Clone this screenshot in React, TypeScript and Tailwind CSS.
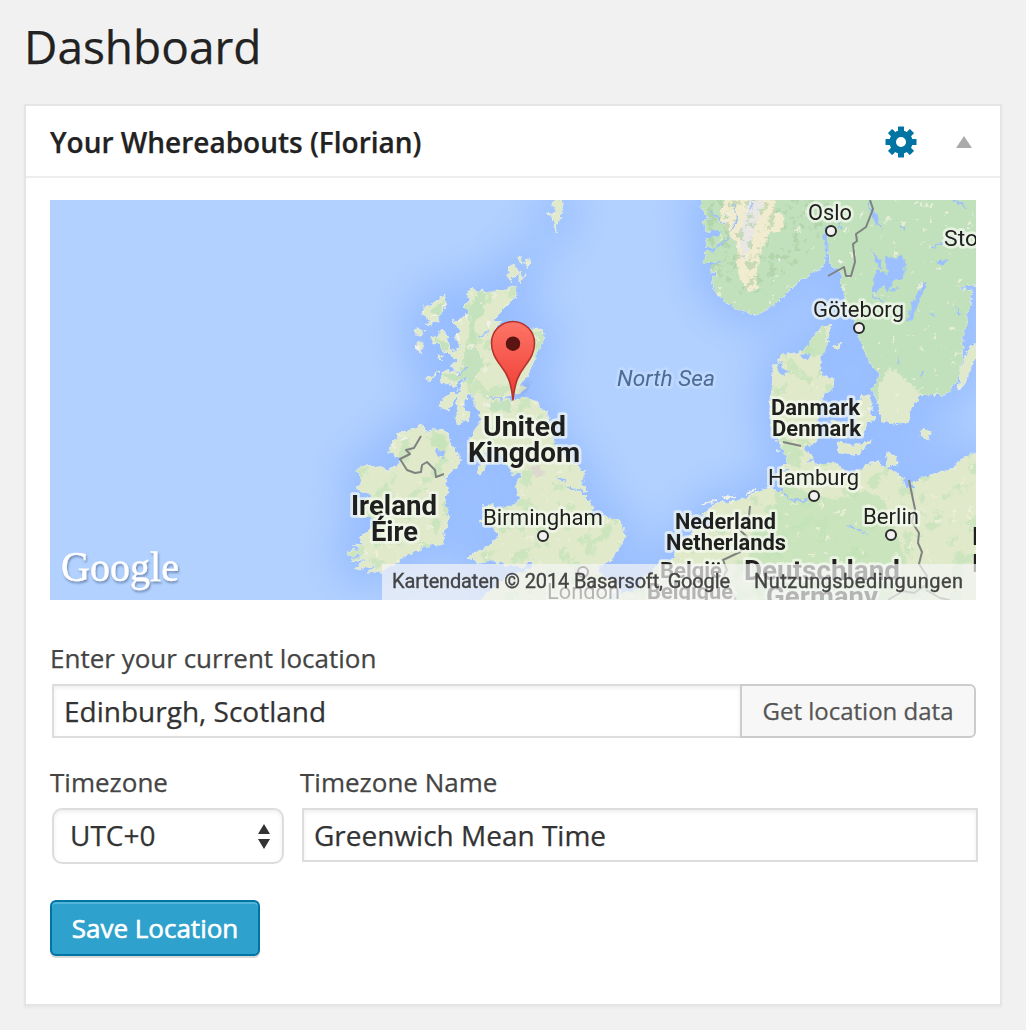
import React from "react";

const BRITAIN =
  "M472 288 L478 292 L485 291 L498 291 L506 290 L512 287 L517 288 L515 298 L506 307 L497 316 L492 321 L501 322 L494 331 L506 330 L520 329 L533 329 L541 329 L545 337 L540 347 L535 360 L530 372 L524 380 L520 386 L526 388 L522 391 L512 395 L502 398 L513 400 L527 397 L537 402 L542 409 L547 413 L552 433 L555 447 L570 460 L577 466 L585 473 L582 484 L588 492 L578 489 L587 498 L593 506 L592 515 L607 517 L620 521 L625 531 L623 543 L615 553 L612 560 L600 565 L598 572 L606 577 L616 582 L614 592 L600 602 L480 602 L487 593 L497 585 L507 577 L522 573 L531 567 L535 557 L525 567 L503 565 L493 560 L480 562 L467 558 L473 553 L485 549 L493 543 L498 536 L493 527 L490 523 L478 523 L485 517 L482 506 L490 505 L497 508 L513 505 L520 503 L517 489 L517 480 L522 472 L513 476 L511 469 L507 464 L497 447 L488 447 L480 462 L474 450 L468 453 L470 438 L475 430 L482 420 L477 410 L473 401 L474 392 L466 396 L464 402 L465 412 L462 424 L457 425 L456 418 L458 405 L457 394 L463 384 L467 376 L457 380 L453 376 L461 372 L451 368 L457 361 L449 353 L461 347 L454 337 L460 331 L453 322 L463 318 L468 313 L464 305 L470 299 L468 292 Z";
const IRELAND =
  "M420 424 L427 432 L437 429 L448 432 L450 445 L458 452 L461 462 L453 470 L445 478 L448 493 L445 502 L449 517 L445 530 L442 545 L430 545 L420 550 L407 555 L397 563 L383 570 L373 573 L367 572 L378 563 L360 570 L354 568 L370 558 L355 563 L352 560 L366 553 L348 557 L347 552 L362 548 L353 546 L363 543 L360 538 L368 530 L377 522 L372 518 L358 516 L363 503 L372 495 L358 490 L362 480 L357 470 L360 466 L380 467 L386 470 L395 468 L401 458 L388 452 L393 443 L398 433 L413 430 Z";
const SCANDINAVIA =
  "M700 198 L704 215 L711 217 L703 221 L706 232 L716 233 L706 238 L708 248 L719 246 L706 252 L703 263 L714 262 L710 274 L716 273 L712 287 L723 300 L740 311 L757 315 L770 308 L787 293 L803 277 L822 268 L825 257 L825 243 L827 240 L828 255 L832 267 L841 271 L842 287 L845 303 L853 317 L857 333 L862 347 L870 363 L880 375 L872 390 L877 400 L881 420 L893 424 L909 422 L911 407 L922 395 L948 394 L957 380 L962 360 L963 340 L968 313 L973 291 L956 288 L976 284 L980 284 L980 198 Z";
const CONTINENT =
  "M832 323 L817 331 L807 347 L800 352 L782 355 L773 367 L772 387 L770 407 L772 433 L780 443 L784 453 L788 461 L782 467 L777 474 L779 486 L784 492 L772 489 L767 488 L755 493 L747 498 L740 500 L717 503 L703 513 L698 525 L690 535 L680 543 L675 552 L672 560 L660 563 L650 573 L640 580 L640 588 L623 594 L612 602 L980 602 L980 452 L963 457 L953 468 L930 475 L911 482 L917 490 L905 487 L903 478 L890 470 L877 462 L866 466 L853 473 L840 469 L837 463 L815 464 L811 454 L803 449 L817 440 L818 420 L820 403 L825 392 L833 389 L834 378 L822 377 L820 357 L825 350 Z";
const ISLANDS =
  "M445 294 L446 305 L439 317 L438 321 L429 320 L423 315 L424 306 L431 306 Z M426 324 L433 320 L431 326 Z M415 329 L424 330 L423 336 L416 335 Z M417 341 L422 341 L421 354 L417 350 Z M431 336 L438 338 L442 329 L446 335 L450 347 L451 352 L443 352 L440 343 L433 344 Z M442 372 L454 370 L462 376 L455 386 L446 384 L441 380 Z M444 398 L452 392 L457 394 L449 410 L438 407 Z M464 410 L470 412 L468 422 L463 419 Z M427 379 L440 371 L430 381 Z M438 355 L444 356 L440 361 Z M481 464 L488 466 L480 475 L477 473 Z M509 267 L514 264 L518 270 L517 275 L511 281 L507 276 Z M519 272 L525 276 L519 284 Z M516 257 L521 259 L523 264 Z M524 262 L531 259 L528 268 Z M548 213 L556 211 L552 202 L558 198 L563 204 L560 216 L556 232 L553 218 Z M975 343 L968 350 L960 370 L959 390 L963 387 L977 355 Z M922 427 L930 432 L929 440 L921 436 Z M861 397 L870 395 L872 407 L870 414 L876 419 L867 423 L864 434 L858 432 L855 412 Z M830 420 L848 424 L845 438 L832 435 Z M837 443 L857 445 L871 440 L859 455 L840 452 Z M887 453 L897 457 L897 465 L886 466 Z M834 346 L842 343 L837 350 Z M869 462 L879 461 L873 464 Z";
const LAKES =
  "M885 257 L895 259 L903 255 L905 262 L904 277 L899 281 L893 280 L887 292 L885 285 L873 294 L873 280 L877 270 L889 275 L886 265 Z M923 281 L927 283 L912 318 L908 323 L910 308 L918 294 Z M870 247 L882 263 L879 269 Z M936 261 L949 260 L941 265 Z M826 225 L828 252 L823 239 Z M437 450 L444 451 L443 459 L436 457 Z M777 363 L783 361 L781 368 L791 372 L784 375 L776 370 Z M801 355 L811 353 L807 360 Z M712 229 L722 234 L708 238 Z M704 249 L720 245 L714 253 Z M707 263 L724 261 L712 265 Z M866 200 L876 215 L882 230 L873 219 Z M898 356 L900 364 L897 363 Z M921 370 L924 374 L920 376 Z M955 306 L962 316 L957 314 Z M930 312 L935 316 L931 316 Z M700 511 L711 522 L705 530 L700 524 Z";
const RIVERS =
  "M472 399 L464 408 M468 367 L458 376 M503 398 L490 398 M490 330 L480 337 M557 478 L565 480 M568 488 L583 491 M780 490 L791 500 L808 500 M848 525 L860 530 L867 535 M770 470 L785 473 M778 470 L789 471 M932 248 L953 237 L967 243 M953 200 L967 208 M734 203 L737 220 L731 232 M710 212 L725 224 M718 246 L731 236 M750 210 L754 200 M889 291 L900 288 M872 296 L885 301 M813 460 L806 462 M855 330 L851 337 M901 225 L905 230 M829 205 L841 228";
const BORDERS =
  "M421 436 L414 448 L406 450 L410 454 L400 459 L407 470 L415 473 L421 472 L422 465 L427 462 L435 470 L436 477 L444 474 M870 200 L873 209 L866 227 L856 234 L857 241 L853 244 L855 262 L851 276 L846 276 L844 267 L828 276 M783 442 L801 446 M750 506 L749 516 L740 530 L747 537 L740 552 L723 560 L727 570 L722 578 L736 600 M909 480 L911 490 L915 509 L912 522 L919 533 L918 543 L922 552 L919 564 L927 576 L926 585 L914 593 L903 591 L888 600 M926 590 L940 598 L950 600";

const LAND = [BRITAIN, IRELAND, SCANDINAVIA, CONTINENT, ISLANDS].join(" ");

type LabelProps = {
  x: number;
  y: number;
  w: number;
  size: number;
  children: string;
  weight?: number;
  fill?: string;
  halo?: string;
  italic?: boolean;
};

function Label({ x, y, w, size, children, weight = 400, fill = "#1f1f1f", halo = "#f5f9ef", italic }: LabelProps) {
  return (
    <text
      x={x}
      y={y}
      textLength={w}
      lengthAdjust="spacingAndGlyphs"
      fontSize={size}
      fontWeight={weight}
      fontStyle={italic ? "italic" : "normal"}
      fill={fill}
      stroke={halo}
      strokeOpacity={0.7}
      strokeWidth={5.5}
      strokeLinejoin="round"
      paintOrder="stroke"
    >
      {children}
    </text>
  );
}

const CITIES: [number, number][] = [
  [831, 231],
  [859, 328],
  [814, 496],
  [891, 535],
  [543, 536],
  [583, 572],
];

function WhereaboutsMap() {
  return (
    <svg viewBox="50 200 926 400" className="block h-[400px] w-full font-[Roboto,sans-serif]">
      <defs>
        <filter id="coast" x="50" y="195" width="930" height="410" filterUnits="userSpaceOnUse" colorInterpolationFilters="sRGB">
          <feTurbulence type="fractalNoise" baseFrequency="0.2" numOctaves={3} seed={4} result="n" />
          <feDisplacementMap in="SourceGraphic" in2="n" scale={7} xChannelSelector="R" yChannelSelector="G" />
        </filter>
        <filter id="shelf" x="0" y="150" width="1030" height="500" filterUnits="userSpaceOnUse" colorInterpolationFilters="sRGB">
          <feGaussianBlur stdDeviation={20} />
        </filter>
        <filter id="woods" x="50" y="195" width="930" height="410" filterUnits="userSpaceOnUse" colorInterpolationFilters="sRGB">
          <feTurbulence type="fractalNoise" baseFrequency="0.06" numOctaves={4} seed={9} />
          <feColorMatrix values="0 0 0 0 0.77  0 0 0 0 0.89  0 0 0 0 0.72  16 0 0 0 -9.4" result="n" />
          <feComposite in="n" in2="SourceGraphic" operator="in" />
        </filter>
        <filter id="specks" x="50" y="195" width="930" height="410" filterUnits="userSpaceOnUse" colorInterpolationFilters="sRGB">
          <feTurbulence type="fractalNoise" baseFrequency="0.12" numOctaves={3} seed={21} />
          <feColorMatrix values="0 0 0 0 0.94  0 0 0 0 0.94  0 0 0 0 0.87  0 20 0 0 -14.4" result="n" />
          <feComposite in="n" in2="SourceGraphic" operator="in" />
        </filter>
        <filter id="ridges" x="50" y="195" width="930" height="410" filterUnits="userSpaceOnUse" colorInterpolationFilters="sRGB">
          <feTurbulence type="fractalNoise" baseFrequency="0.13" numOctaves={3} seed={13} />
          <feColorMatrix values="0 0 0 0 0.66  0 0 0 0 0.8  0 0 0 0 0.63  12 0 0 0 -6.7" result="n" />
          <feComposite in="n" in2="SourceGraphic" operator="in" />
        </filter>
        <filter id="soft">
          <feGaussianBlur stdDeviation={3} />
        </filter>
        <filter id="logoShadow" x="-10%" y="-20%" width="120%" height="150%">
          <feDropShadow dx={1} dy={2} stdDeviation={1} floodColor="#4d6688" floodOpacity={0.65} />
        </filter>
        <clipPath id="land">
          <path d={LAND} />
        </clipPath>
        <linearGradient id="pin" x1="0" y1="0" x2="0" y2="1">
          <stop offset="0" stopColor="#fd7567" />
          <stop offset="1" stopColor="#ef3a32" />
        </linearGradient>
      </defs>

      <rect x="50" y="200" width="926" height="400" fill="#b2d1ff" />
      <path d={LAND} fill="#94baff" stroke="#94baff" strokeWidth={30} strokeLinejoin="round" opacity={0.85} filter="url(#shelf)" />

      <g filter="url(#coast)">
        <path d={LAND} fill="#e0eacb" stroke="#e6eedd" strokeWidth={0.8} />
        <g clipPath="url(#land)">
          <path d={SCANDINAVIA} fill="#c0e1bb" />
          <path d="M776 480 L800 490 L836 500 L866 490 L884 500 L906 560 L890 602 L760 602 L748 560 L752 530 L774 524 Z" fill="#cae5bd" />
          <path d="M878 385 L890 366 L897 372 L912 385 L922 395 L911 424 L878 424 Z" fill="#dfe9cc" />
          <path d="M800 352 L826 322 L826 354 L812 357 Z M784 436 L800 450 L800 468 L780 460 Z" fill="#cae5bd" />
          <path d="M478 292 L486 292 L484 312 L474 322 L476 345 L484 365 L470 384 L458 382 L462 360 L470 335 L468 312 Z M490 402 L512 400 L510 412 L490 410 Z M430 310 L444 300 L440 316 Z M432 336 L450 345 L444 352 Z M442 374 L460 374 L456 384 Z" fill="#c4e2bd" />
          <path d="M432 430 L446 436 L446 450 L430 446 Z M530 329 L545 335 L538 350 Z" fill="#cbe5be" />
        </g>
      </g>

      <g filter="url(#coast)">
        <path d={[BRITAIN, IRELAND, CONTINENT].join(" ")} filter="url(#woods)" opacity={0.7} />
        <path d="M724 198 L773 198 L776 212 L785 216 L782 230 L768 234 L762 250 L757 268 L757 288 L748 292 L740 280 L736 262 L738 246 L728 232 L720 222 Z" fill="#f1ebcf" />
        <path d="M748 198 L765 198 L757 220 L749 250 L742 258 L741 230 Z" fill="#e8e7e4" />
        <path d="M705 198 L830 198 L822 230 L800 265 L745 300 L712 270 Z" filter="url(#ridges)" opacity={0.55} />
        <path d="M529 467 L540 466 L545 475 L536 478 Z" fill="#dcd8cf" />
        <path d={LAND} filter="url(#specks)" opacity={0.8} />
        <path d={LAKES} fill="#9bbfff" />
        <path d={RIVERS} fill="none" stroke="#9bbfff" strokeWidth={1.4} />
        <path
          d="M703 505 L716 500 M724 498 L735 496 M746 493 L755 490 M777 450 L781 453 M432 317 L438 314 M417 344 L418 352 M457 335 L459 340 M468 314 L466 319 M487 322 L489 326 M487 403 L490 407 M402 441 L406 437 M867 408 L872 411 M843 263 L838 260 M780 258 L778 261"
          stroke="#f2f2ec"
          strokeWidth={2.4}
        />
      </g>

      <path d={BORDERS} fill="none" stroke="#7f8280" strokeWidth={2} strokeLinejoin="round" />

      {CITIES.map(([cx, cy]) => (
        <circle key={cx} cx={cx} cy={cy} r={5} fill="#f1f1f1" stroke="#2b2b2b" strokeWidth={2} />
      ))}

      <Label x={808} y={220} w={44} size={22}>Oslo</Label>
      <Label x={944} y={246} w={34} size={22}>Sto</Label>
      <Label x={813} y={317} w={91} size={22}>Göteborg</Label>
      <Label x={768} y={485} w={91} size={22}>Hamburg</Label>
      <Label x={863} y={524} w={56} size={22}>Berlin</Label>
      <Label x={483} y={525} w={120} size={22}>Birmingham</Label>
      <Label x={617} y={386} w={98} size={22} italic fill="#4c6c94" halo="#c3dbff">North Sea</Label>
      <Label x={483} y={436} w={83} size={27} weight={700}>United</Label>
      <Label x={468} y={462} w={112} size={27} weight={700}>Kingdom</Label>
      <Label x={351} y={515} w={86} size={27} weight={700}>Ireland</Label>
      <Label x={371} y={541} w={47} size={27} weight={700}>Éire</Label>
      <Label x={771} y={415} w={89} size={22} weight={700}>Danmark</Label>
      <Label x={772} y={436} w={89} size={22} weight={700}>Denmark</Label>
      <Label x={675} y={529} w={101} size={22} weight={700}>Nederland</Label>
      <Label x={666} y={550} w={120} size={22} weight={700}>Netherlands</Label>
      <Label x={660} y={578} w={62} size={22} weight={700}>België</Label>
      <Label x={647} y={599} w={86} size={22} weight={700}>Belgique</Label>
      <Label x={744} y={580} w={156} size={27} weight={700}>Deutschland</Label>
      <Label x={766} y={606} w={112} size={27} weight={700}>Germany</Label>
      <Label x={547} y={599} w={73} size={22}>London</Label>
      <path d="M975 527 V545 M975 554 V572" stroke="#1f1f1f" strokeWidth={2.4} />

      <ellipse cx={524} cy={389} rx={3} ry={9} fill="#000" opacity={0.1} transform="rotate(35 524 389)" filter="url(#soft)" />
      <path
        d="M513 400 C511 382 508 375 501 366 C495 358 491.500 352 491.500 343 A21.500 21.500 0 0 1 534.500 343 C534.500 352 531 358 525 366 C518 375 515 382 513 400 Z"
        fill="url(#pin)"
        stroke="#b3332d"
        strokeWidth={1.6}
        strokeLinejoin="round"
      />
      <circle cx={513} cy={343.700} r={7.200} fill="#5a1411" />

      <rect x="382" y="564" width="594" height="36" fill="#f5f5f5" fillOpacity={0.7} />
      <g fontSize={20} fill="#444" stroke="#444" strokeWidth={0.35}>
        <text x="392" y="588" textLength="338" lengthAdjust="spacing">Kartendaten © 2014 Basarsoft, Google</text>
        <text x="754" y="588" textLength="209" lengthAdjust="spacing">Nutzungsbedingungen</text>
      </g>

      <text
        x="61"
        y="581"
        textLength="118"
        lengthAdjust="spacingAndGlyphs"
        fontSize={43}
        fill="#fff"
        stroke="#fff"
        strokeWidth={0.4}
        fontFamily="'Liberation Serif', serif"
        filter="url(#logoShadow)"
      >
        Google
      </text>
    </svg>
  );
}

function GearIcon() {
  return (
    <svg viewBox="-16 -16 32 32" className="size-8">
      <g fill="#0074a2">
        {[0, 45, 90, 135, 180, 225, 270, 315].map((angle) => (
          <rect key={angle} x={-3} y={-15.500} width={6} height={8} rx={0.500} transform={`rotate(${angle})`} />
        ))}
      </g>
      <circle r={8.300} fill="none" stroke="#0074a2" strokeWidth={6.600} />
    </svg>
  );
}

const INPUT =
  "h-[54px] border-2 border-[#ddd] bg-white px-2.5 text-[28px] text-[#333] shadow-[inset_0_2px_4px_rgba(0,0,0,0.07)] outline-none [-webkit-text-stroke:0.25px]";

export default function App() {
  return (
    <div className="h-[1030px] bg-[#f1f1f1] px-6 pt-4 font-['Open_Sans',sans-serif] text-[26px] text-[#444] [-webkit-text-stroke:0.25px]">
      <h1 className="h-[88px] text-[46px] leading-[60px] text-[#222]">Dashboard</h1>

      <section className="h-[902px] w-[978px] border-2 border-[#e5e5e5] bg-white shadow-[0_2px_2px_rgba(0,0,0,0.04)]">
        <header className="flex h-[72px] items-center border-b-2 border-[#eee] pt-0.5 pr-[28px] pl-6">
          <h2 className="grow text-[28px] leading-9 font-semibold text-[#222]">Your Whereabouts (Florian)</h2>
          <button className="mr-[39px]" aria-label="Configure">
            <GearIcon />
          </button>
          <svg viewBox="0 0 16 12" className="h-3 w-4">
            <path d="M8 0 L16 12 H0 Z" fill="#aaa" />
          </svg>
        </header>

        <div className="px-6 pt-[22px]">
          <div className="w-[926px]">
            <WhereaboutsMap />
          </div>

          <label className="mt-10 block h-[44px] leading-[36px]">Enter your current location</label>
          <div className="flex w-[926px] pl-0.5">
            <input className={`${INPUT} w-[688px] border-r-0`} defaultValue="Edinburgh, Scotland" />
            <button className="h-[54px] grow rounded-r-md border-2 border-[#ccc] bg-[#f7f7f7] text-[24px] whitespace-nowrap text-[#555] [-webkit-text-stroke:0.25px]">
              Get location data
            </button>
          </div>

          <div className="mt-[26px] flex gap-4">
            <div className="w-[234px]">
              <label className="block h-[44px] leading-[36px]">Timezone</label>
              <div className="ml-0.5 flex h-[56px] w-[232px] items-center justify-between rounded-[10px] border-2 border-[#ddd] bg-white pr-3 pb-0.5 pl-4 text-[28px] text-[#333] shadow-[inset_0_2px_4px_rgba(0,0,0,0.07)]">
                UTC+0
                <svg viewBox="0 0 12 25" className="mt-0.5 h-[25px] w-3">
                  <path d="M6 0 L12 10 H0 Z M6 25 L12 15 H0 Z" fill="#333" />
                </svg>
              </div>
            </div>
            <div>
              <label className="block h-[44px] leading-[36px]">Timezone Name</label>
              <input className={`${INPUT} ml-0.5 w-[676px]`} defaultValue="Greenwich Mean Time" />
            </div>
          </div>

          <button className="mt-9 h-[56px] w-[210px] rounded-md border-2 border-[#0074a2] bg-[#2ea2cc] text-[26px] whitespace-nowrap text-white shadow-[inset_0_2px_0_rgba(120,200,230,0.5),0_2px_0_rgba(0,0,0,0.15)] [-webkit-text-stroke:0.6px]">
            Save Location
          </button>
        </div>
      </section>
    </div>
  );
}
